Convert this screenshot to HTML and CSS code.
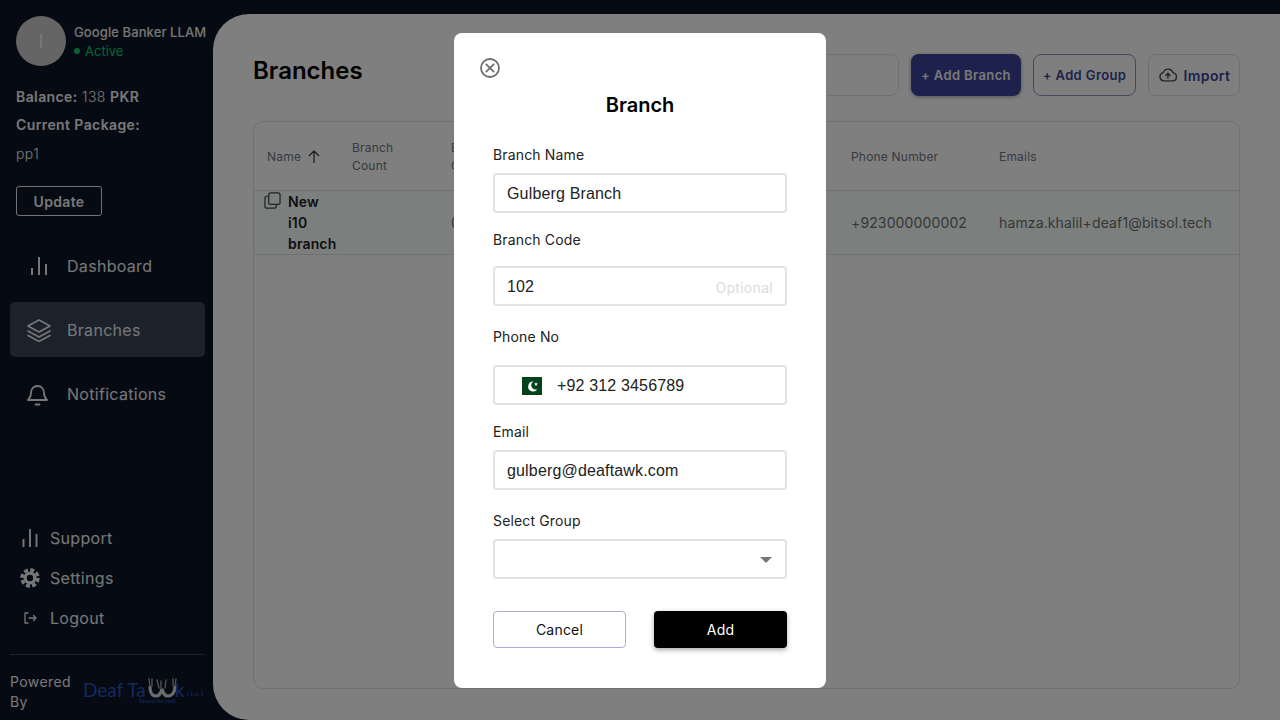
FILE: index.html
```html
<!DOCTYPE html>
<html>
  <head>
    <title>Branches</title>
    <meta charset="UTF-8" />
    <link rel="stylesheet" href="styles.css">
  </head>
  <body>
    <aside class="sidebar">
      <div class="profile">
        <div class="avatar">I</div>
        <div>
          <div class="profile-name">Google Banker LLAM</div>
          <div class="profile-status"><span class="status-dot"></span>Active</div>
        </div>
      </div>
      <p class="balance"><b>Balance:</b> 138 <b>PKR</b></p>
      <p class="package"><b>Current Package:</b></p>
      <p class="package-name">pp1</p>
      <button class="update-button">Update</button>

      <nav class="nav">
        <a class="nav-item">
          <svg class="nav-icon" width="24" height="24" viewBox="0 0 24 24" fill="none" stroke="currentColor" stroke-width="2">
            <path d="M5 21v-7M12 21V3M19 21V10" />
          </svg>
          Dashboard
        </a>
        <a class="nav-item nav-item-active">
          <svg class="nav-icon" width="24" height="24" viewBox="0 0 24 24" fill="none" stroke="currentColor" stroke-width="1.6" stroke-linejoin="round" stroke-linecap="round">
            <path d="M12 2 23 8 12 14 1 8Z" />
            <path d="M1 13 12 19 23 13" />
            <path d="M1 17.500 12 23.500 23 17.500" />
          </svg>
          Branches
        </a>
        <a class="nav-item">
          <svg class="nav-icon" width="24" height="24" viewBox="0 0 24 24" fill="none" stroke="currentColor" stroke-width="1.8" stroke-linecap="round" stroke-linejoin="round">
            <path d="M1 18c2-2 3-3 3-7 0-4 2.500-7 6.500-7s6.500 3 6.500 7c0 4 1 5 3 7Z" />
            <path d="M8.500 22.500h4" />
          </svg>
          Notifications
        </a>
      </nav>

      <div class="bottom-nav">
        <a class="bottom-item">
          <span class="bottom-icon">
            <svg width="20" height="20" viewBox="0 0 20 20" fill="none" stroke="currentColor" stroke-width="1.900">
              <path d="M3.500 19v-8M10 19V1M16.500 19V6" />
            </svg>
          </span>
          Support
        </a>
        <a class="bottom-item">
          <span class="bottom-icon">
            <svg width="20" height="20" viewBox="0 0 20 20">
              <circle cx="10" cy="10" r="6.500" fill="currentColor" />
              <circle cx="10" cy="10" r="8" fill="none" stroke="currentColor" stroke-width="3.500" stroke-dasharray="4 2.280" />
              <circle cx="10" cy="10" r="3.200" fill="#0c1626" />
            </svg>
          </span>
          Settings
        </a>
        <a class="bottom-item">
          <span class="bottom-icon">
            <svg width="14" height="14" viewBox="0 0 14 14" fill="none" stroke="currentColor" stroke-width="1.300" stroke-linecap="round" stroke-linejoin="round">
              <path d="M5 2H2v10h3M6 7h7M10.500 4.500 13 7l-2.500 2.500" />
            </svg>
          </span>
          Logout
        </a>
      </div>

      <div class="powered">
        <span class="powered-text">Powered By</span>
        <span class="logo">
          <span>Deaf Ta</span>
          <svg class="logo-hands" width="29" height="20" viewBox="0 0 29 20" fill="none" stroke-linecap="round">
            <path d="M2 9c0 5 2 9 6 9 3 0 5-3 6-7 1 4 3 7 6 7 4 0 7-4 7-9" stroke="#d8d8d8" stroke-width="3.200" />
            <path d="M2 8 1 1M4 8l0-7M11 10 9 2M13 10 13 3M17 10l1-8M25 8l0-7M27 8l1-7" stroke="#a8a8a8" stroke-width="1.300" />
          </svg>
          <span>k</span>
          <span class="logo-version">v1.0.1</span>
          <span class="logo-tagline">Review the need</span>
        </span>
      </div>
    </aside>

    <main class="main">
      <header class="main-header">
        <h1 class="page-title">Branches</h1>
        <div class="actions">
          <input class="search" />
          <button class="btn btn-primary">+ Add Branch</button>
          <button class="btn btn-outline">+ Add Group</button>
          <button class="btn btn-import">
            <svg width="20" height="20" viewBox="0 0 24 24" fill="none" stroke="#4a4a4a" stroke-width="1.700" stroke-linecap="round" stroke-linejoin="round">
              <path d="M7 19a5 5 0 0 1-.5-9.900A6 6 0 0 1 18 9.500 4.800 4.800 0 0 1 18 19Z" />
              <path d="M12 16v-6M9.500 12.500 12 10l2.500 2.500" />
            </svg>
            Import
          </button>
        </div>
      </header>

      <section class="table">
        <div class="table-row table-head">
          <div class="cell cell-name">
            Name
            <svg width="16" height="16" viewBox="0 0 16 16" fill="none" stroke="#3c3f46" stroke-width="1.300">
              <path d="M8 14V2.500M3 7l5-5 5 5" />
            </svg>
          </div>
          <div class="cell">Branch Count</div>
          <div class="cell cell-narrow">Branch Code</div>
          <div class="cell">Phone Number</div>
          <div class="cell">Emails</div>
        </div>
        <div class="table-row table-body">
          <div class="cell cell-title">
            <svg class="copy-icon" width="17" height="17" viewBox="0 0 18 18" fill="none" stroke="#3a4656" stroke-width="1.300" stroke-linejoin="round">
              <rect x="5" y="1" width="12" height="12" rx="2" />
              <path d="M5 4.500H3a2 2 0 0 0-2 2V15a2 2 0 0 0 2 2h8a2 2 0 0 0 2-2v-2" />
            </svg>
            <span class="branch-title">New i10 branch</span>
          </div>
          <div class="cell"></div>
          <div class="cell">0</div>
          <div class="cell cell-value">+923000000002</div>
          <div class="cell cell-value">hamza.khalil+deaf1@bitsol.tech</div>
        </div>
      </section>
    </main>

    <div class="overlay">
      <div class="modal">
        <svg class="close-icon" width="22" height="22" viewBox="0 0 22 22" fill="none" stroke="#6e6e6e" stroke-width="1.800">
          <circle cx="11" cy="11" r="9" />
          <path d="M6.800 6.800l8.400 8.400M15.200 6.800l-8.400 8.400" />
        </svg>
        <h2 class="modal-title">Branch</h2>

        <label class="field-label">Branch Name</label>
        <div class="field">Gulberg Branch</div>

        <label class="field-label label-code">Branch Code</label>
        <div class="field field-code">102<span class="optional">Optional</span></div>

        <label class="field-label label-phone">Phone No</label>
        <div class="field field-phone">
          <svg class="flag" width="20" height="18" viewBox="0 0 20 18">
            <rect width="20" height="18" fill="#01411c" />
            <path d="M11.500 4.500a5 5 0 1 0 4 7.500 4.200 4.200 0 1 1-4-7.500Z" fill="#fff" />
            <path d="m14 5 .5 1.500H16l-1.200.9.500 1.500-1.300-.9-1.300.9.500-1.500-1.200-.9h1.500Z" fill="#fff" />
          </svg>
          +92 312 3456789
        </div>

        <label class="field-label label-next">Email</label>
        <div class="field">gulberg@deaftawk.com</div>

        <label class="field-label label-group">Select Group</label>
        <div class="field field-select"><span class="caret"></span></div>

        <div class="modal-buttons">
          <button class="modal-btn modal-cancel">Cancel</button>
          <button class="modal-btn modal-add">Add</button>
        </div>
      </div>
    </div>
  </body>
</html>
```

FILE: styles.css
```css
* {
  box-sizing: border-box;
}

html,
body {
  height: 100%;
}

body {
  margin: 0;
  display: flex;
  overflow: hidden;
  font-family: Inter, "Liberation Sans", sans-serif;
  background: #0c1626;
  color: #fff;
}

/* Sidebar */
.sidebar {
  width: 213px;
  height: 720px;
  flex-shrink: 0;
  display: flex;
  flex-direction: column;
  padding: 16px 8px 0 16px;
}

.profile {
  display: flex;
  align-items: center;
  gap: 8px;
  white-space: nowrap;
}

.avatar {
  width: 50px;
  height: 50px;
  flex-shrink: 0;
  border-radius: 50%;
  background: #cbcbcb;
  color: #fff;
  font-size: 18px;
  font-weight: 300;
  display: flex;
  align-items: center;
  justify-content: center;
}

.profile-name {
  font-size: 13px;
  font-weight: 500;
  line-height: 18px;
  letter-spacing: 0.1px;
  color: #ececec;
}

.profile-status {
  font-size: 13px;
  line-height: 18px;
  margin-top: 1px;
  color: #12c46a;
  display: flex;
  align-items: center;
  gap: 5px;
}

.status-dot {
  width: 6px;
  height: 6px;
  border-radius: 50%;
  background: #12c46a;
}

.balance,
.package,
.package-name {
  margin: 0;
  font-size: 14px;
  line-height: 20px;
  color: #f0f0f0;
  letter-spacing: 0.4px;
}

.balance {
  font-weight: 300;
  margin-top: 21px;
}

.balance b,
.package b {
  font-weight: 600;
}

.package {
  margin-top: 8px;
}

.package-name {
  margin-top: 9px;
  font-weight: 300;
}

.update-button {
  width: 86px;
  height: 30px;
  margin-top: 22px;
  background: none;
  border: 1px solid #e8e8e8;
  border-radius: 3px;
  color: #f0f0f0;
  font: 600 14px Inter, sans-serif;
  letter-spacing: 0.35px;
}

.nav {
  margin: 22px 0 0 -6px;
  display: flex;
  flex-direction: column;
  gap: 9px;
}

.nav-item {
  height: 55px;
  padding-left: 17px;
  display: flex;
  align-items: center;
  gap: 16px;
  border-radius: 5px;
  font-size: 16px;
  letter-spacing: 0.3px;
  color: #efefef;
}

.nav-item-active {
  background: #364458;
}

.nav-icon {
  flex-shrink: 0;
}

.bottom-nav {
  margin: auto 0 0 -6px;
  display: flex;
  flex-direction: column;
}

.bottom-item {
  height: 40px;
  display: flex;
  align-items: center;
  gap: 10px;
  font-size: 16px;
  letter-spacing: 0.3px;
  color: #efefef;
}

.bottom-icon {
  width: 20px;
  margin-left: 10px;
  display: flex;
  justify-content: center;
}

.powered {
  margin: 16px 0 0 -6px;
  padding: 17px 0 8px;
  border-top: 1px solid #3a4350;
  display: flex;
  align-items: center;
  gap: 11px;
}

.powered-text {
  width: 62px;
  font-size: 14px;
  line-height: 20px;
  letter-spacing: 0.4px;
  color: #efefef;
}

.logo {
  position: relative;
  display: flex;
  align-items: center;
  font-family: Lato, sans-serif;
  font-size: 19px;
  color: #2a50bc;
  white-space: nowrap;
  margin-top: -5px;
}

.logo-hands {
  margin: -4px -2px 0 2px;
}

.logo-version {
  font-size: 6px;
  margin: 8px 0 0 2px;
  letter-spacing: 0.2px;
}

.logo-tagline {
  position: absolute;
  left: 56px;
  top: 20px;
  font-size: 5px;
}

/* Page */
.main {
  flex: 1;
  height: 706px;
  margin-top: 14px;
  padding: 40px 40px 31px;
  background: #fff;
  border-radius: 36px 0 0 36px;
  display: flex;
  flex-direction: column;
  color: #111;
}

.main-header {
  display: flex;
  align-items: center;
  justify-content: space-between;
  margin-bottom: 25px;
}

.page-title {
  margin: 0 0 10px;
  font-size: 24px;
  font-weight: 600;
  color: #000;
}

.actions {
  display: flex;
  gap: 12px;
}

.search {
  width: 300px;
  height: 42px;
  border: 1px solid #e2e2e2;
  border-radius: 8px;
}

.btn {
  height: 42px;
  border-radius: 8px;
  font: 600 13px Inter, sans-serif;
  letter-spacing: 0.38px;
  background: #fff;
}

.btn-primary {
  width: 110px;
  border: none;
  background: #3c4399;
  color: #f0f0f0;
  box-shadow: 0 1px 4px rgba(0, 0, 0, 0.35);
}

.btn-outline {
  width: 103px;
  border: 1px solid #8d92c8;
  color: #3c4399;
}

.btn-import {
  width: 92px;
  border: 1px solid #dedede;
  color: #3c4399;
  font-size: 14px;
  display: flex;
  align-items: center;
  justify-content: center;
  gap: 6px;
}

.table {
  flex: 1;
  border: 1px solid #dfe0e0;
  border-radius: 10px;
  overflow: hidden;
}

.table-row {
  display: grid;
  grid-template-columns: 86px 99px 400px 148px 1fr;
  align-items: center;
  border-bottom: 1px solid #dee0e0;
}

.table-head {
  height: 69px;
  padding-top: 2px;
  font-size: 12px;
  line-height: 18px;
  letter-spacing: 0.2px;
  color: #6f7480;
}

.table-body {
  height: 64px;
  background: #f8fffc;
  font-size: 14px;
  letter-spacing: 0.13px;
  color: #6b6f6f;
}

.cell {
  padding: 0 12px;
}

.cell-name {
  display: flex;
  align-items: center;
  gap: 5px;
  padding-left: 13px;
}

.cell-narrow {
  width: 60px;
}

.cell-title {
  position: relative;
  padding: 0 0 0 34px;
}

.copy-icon {
  position: absolute;
  left: 10px;
  top: 1px;
}

.branch-title {
  display: block;
  width: 50px;
  font-weight: 600;
  line-height: 21px;
  letter-spacing: 0.15px;
  color: #1c1c1c;
}

/* Modal */
.overlay {
  position: fixed;
  inset: 0;
  background: rgba(0, 0, 0, 0.5);
}

.modal {
  position: absolute;
  left: 454px;
  top: 33px;
  width: 372px;
  height: 655px;
  padding: 24px 39px 0;
  background: #fff;
  border-radius: 8px;
  color: #111;
  display: flex;
  flex-direction: column;
}

.close-icon {
  margin-left: -14.500px;
  flex-shrink: 0;
}

.modal-title {
  margin: 12px 0 26px;
  text-align: center;
  font-size: 20px;
  line-height: 28px;
  font-weight: 600;
  color: #000;
}

.field-label {
  display: block;
  font-size: 14px;
  line-height: 20px;
  letter-spacing: 0.15px;
  color: #222;
  margin-bottom: 8px;
}

.label-code {
  margin-top: 17px;
  margin-bottom: 16px;
}

.label-phone {
  margin-top: 21px;
  margin-bottom: 18px;
}

.label-next {
  margin-top: 17px;
}

.label-group {
  margin-top: 21px;
}

.field {
  height: 40px;
  flex-shrink: 0;
  padding: 2px 12px 0;
  border: 2px solid #e2e2e2;
  border-radius: 4px;
  display: flex;
  align-items: center;
  font-family: "Liberation Sans", Arial, sans-serif;
  font-size: 16px;
  letter-spacing: 0.16px;
  color: #222;
}

.field-code {
  justify-content: space-between;
}

.optional {
  font-family: Inter, sans-serif;
  font-size: 14px;
  letter-spacing: 0.3px;
  color: #dcdcdc;
}

.field-phone {
  padding-left: 27px;
  gap: 15px;
}

.field-select {
  justify-content: flex-end;
  padding-right: 13px;
}

.caret {
  border-left: 6px solid transparent;
  border-right: 6px solid transparent;
  border-top: 6px solid #777;
}

.modal-buttons {
  margin-top: 32px;
  display: flex;
  justify-content: space-between;
}

.modal-btn {
  width: 133px;
  height: 37px;
  border-radius: 4px;
  font: 400 14px Inter, sans-serif;
  letter-spacing: 0.2px;
}

.modal-cancel {
  background: #fff;
  border: 1px solid #a9acd6;
  color: #111;
}

.modal-add {
  background: #000;
  border: none;
  color: #fff;
  box-shadow: 0 2px 5px rgba(0, 0, 0, 0.35);
}
```
